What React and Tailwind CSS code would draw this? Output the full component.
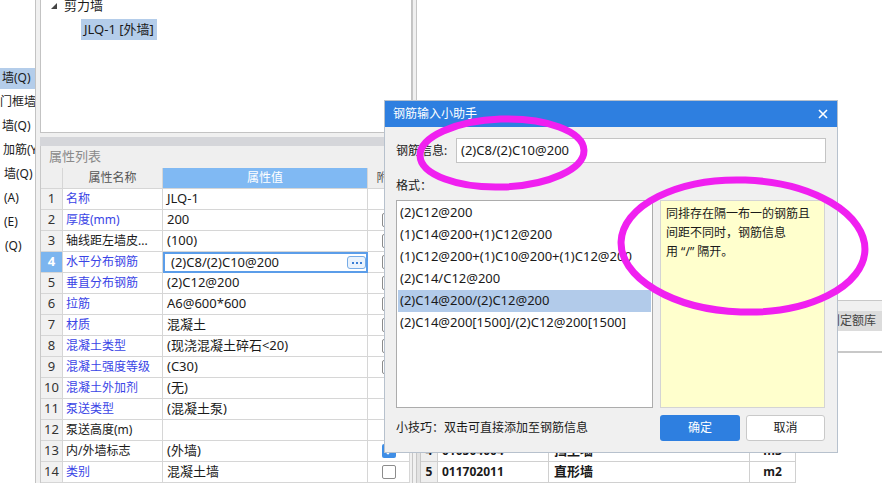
import React from "react";

// only the right-hand part of each label is visible in the narrow strip
const leftItems = [
  { text: "墙(Q)", pl: "pl-[2px]", sel: true },
  { text: "门框墙", pl: "pl-0" },
  { text: "墙(Q)", pl: "pl-[2px]" },
  { text: "加筋(Y)", pl: "pl-[3px]" },
  { text: "墙(Q)", pl: "pl-[4px]" },
  { text: "(A)", pl: "pl-[4px]" },
  { text: "(E)", pl: "pl-[4px]" },
  { text: "(Q)", pl: "pl-[5px]" },
];

const props = [
  { name: "名称", val: "JLQ-1", blue: true, cb: "" },
  { name: "厚度(mm)", val: "200", blue: true, cb: "off" },
  { name: "轴线距左墙皮...", val: "(100)", blue: false, cb: "off" },
  { name: "水平分布钢筋", val: "(2)C8/(2)C10@200", blue: true, cb: "off", sel: true },
  { name: "垂直分布钢筋", val: "(2)C12@200", blue: true, cb: "off" },
  { name: "拉筋", val: "A6@600*600", blue: true, cb: "off" },
  { name: "材质", val: "混凝土", blue: true, cb: "off" },
  { name: "混凝土类型", val: "(现浇混凝土碎石<20)", blue: true, cb: "off" },
  { name: "混凝土强度等级", val: "(C30)", blue: true, cb: "off" },
  { name: "混凝土外加剂", val: "(无)", blue: true, cb: "" },
  { name: "泵送类型", val: "(混凝土泵)", blue: true, cb: "" },
  { name: "泵送高度(m)", val: "", blue: false, cb: "" },
  { name: "内/外墙标志", val: "(外墙)", blue: false, cb: "on" },
  { name: "类别", val: "混凝土墙", blue: true, cb: "off" },
];

const formats = [
  "(2)C12@200",
  "(1)C14@200+(1)C12@200",
  "(1)C12@200+(1)C10@200+(1)C12@200",
  "(2)C14/C12@200",
  "(2)C14@200/(2)C12@200",
  "(2)C14@200[1500]/(2)C12@200[1500]",
];

// rows 1-3 sit under the dialog, so they are left empty
const quota = [
  { n: 1, code: "", name: "", unit: "" },
  { n: 2, code: "", name: "", unit: "" },
  { n: 3, code: "", name: "", unit: "" },
  { n: 4, code: "010504004", name: "挡土墙", unit: "m3" },
  { n: 5, code: "011702011", name: "直形墙", unit: "m2" },
];

function Checkbox({ state }) {
  if (!state) return null;
  if (state === "on") {
    return (
      <div className="w-[14px] h-[14px] rounded-[2px] bg-[#3f8ee6] flex items-center justify-center">
        <svg width="10" height="10" viewBox="0 0 10 10">
          <path d="M1.5 5.2 L4 7.6 L8.6 2.4" fill="none" stroke="white" strokeWidth="1.6" />
        </svg>
      </div>
    );
  }
  return <div className="w-[14px] h-[14px] rounded-[2px] border border-[#8c8c8c] bg-white" />;
}

function PropTable() {
  return (
    <div className="grid grid-cols-[22px_100px_205px_42px] border-l border-[#c8c8c8]">
      <div className="h-[21px] bg-[#efefef] border-r border-b border-[#d6d6d6]" />
      <div className="h-[21px] bg-[#efefef] border-r border-b border-[#d6d6d6] flex items-center justify-center text-[#555]">属性名称</div>
      <div className="h-[21px] bg-[#80b9f3] border-r border-b border-[#d6d6d6] flex items-center justify-center text-white">属性值</div>
      <div className="h-[21px] bg-[#efefef] border-r border-b border-[#d6d6d6] flex items-center justify-center text-[#555]">附加</div>
      {props.map((p, i) => (
        <React.Fragment key={i}>
          <div
            className={
              "h-[21px] border-r border-b border-[#d6d6d6] flex items-center justify-center text-[13px] " +
              (p.sel ? "bg-[#7cb5ef] text-white font-bold" : "bg-[#f1f1f1] text-[#333]")
            }
          >
            {i + 1}
          </div>
          <div
            className={
              "h-[21px] bg-white border-r border-b border-[#d6d6d6] flex items-center pl-[3px] whitespace-nowrap " +
              (p.blue ? "text-[#3a44e6]" : "text-[#1a1a1a]")
            }
          >
            {p.name}
          </div>
          {p.sel ? (
            <div className="h-[21px] bg-white border-2 border-[#5b9de9] flex items-center justify-between pl-[6px] text-[13px]">
              <span>{p.val}</span>
              <div className="w-[19px] h-[13px] rounded-[3px] border border-[#77ace7] bg-[#eaf3fd] flex items-center justify-center gap-[2px]">
                <span className="w-[2px] h-[2px] bg-[#3a7fd6]" />
                <span className="w-[2px] h-[2px] bg-[#3a7fd6]" />
                <span className="w-[2px] h-[2px] bg-[#3a7fd6]" />
              </div>
            </div>
          ) : (
            <div className="h-[21px] bg-white border-r border-b border-[#d6d6d6] flex items-center pl-[4px] text-[13px] whitespace-nowrap">
              {p.val}
            </div>
          )}
          <div className="h-[21px] bg-white border-r border-b border-[#d6d6d6] flex items-center pl-[14px]">
            <Checkbox state={p.cb} />
          </div>
        </React.Fragment>
      ))}
    </div>
  );
}

export default function App() {
  return (
    <div className="relative w-[882px] h-[483px] overflow-hidden bg-white flex text-[12px] text-[#1a1a1a] font-['Noto_Sans','Noto_Sans_CJK_SC',sans-serif]">
      {/* left component list */}
      <div className="w-[36px] shrink-0 bg-white border-r border-[#c3c3c3] overflow-hidden pt-[66px]">
        {leftItems.map((it, i) => (
          <div key={i} className="h-[24px] flex items-center">
            <div className={"h-[21px] w-full flex items-center overflow-hidden " + it.pl + (it.sel ? " bg-[#b4cdea]" : "")}>
              <span className="whitespace-nowrap text-[12px]">{it.text}</span>
            </div>
          </div>
        ))}
      </div>
      <div className="w-[4px] shrink-0 bg-[#f0f0f0]" />

      {/* main panel */}
      <div className="w-[372px] shrink-0 flex flex-col bg-[#f0f0f0]">
        <div className="h-[137px] bg-white border-x border-b border-[#c3c3c3] overflow-hidden">
          <div className="h-[20px] -mt-[4px] flex items-center pl-[10px] gap-[7px]">
            <svg width="6" height="6" viewBox="0 0 6 6">
              <polygon points="6,0 6,6 0,6" fill="#444" />
            </svg>
            <span className="text-[13px]">剪力墙</span>
          </div>
          <div className="mt-[3px] ml-[40px] inline-flex h-[21px] items-center px-[3px] bg-[#b4cdea] text-[13px]">
            JLQ-1 [外墙]
          </div>
        </div>
        <div className="h-[4px]" />
        <div className="h-[9px] bg-[#d5d6da]" />
        <div className="h-[23px] bg-[#efefef] border-l border-[#c8c8c8] flex items-center pl-[8px] text-[13px] text-[#8a8a8a]">
          属性列表
        </div>
        <PropTable />
      </div>

      {/* splitter */}
      <div className="w-[5px] shrink-0 bg-[#f0f0f0] border-x border-[#c6c6c6]" />

      {/* right panel */}
      <div className="flex-1 flex flex-col bg-white">
        <div className="h-[302px]" />
        <div className="h-[31px] border-t border-[#c8c8c8] bg-[#f0f0f0] flex items-end justify-end">
          <div className="h-[20px] bg-[#dcdcdc] flex items-center pl-[8px] pr-[6px] text-[12px] text-[#444]">规则定额库</div>
        </div>
        <div className="h-[20px]" />
        <div className="h-[2px] bg-[#c8c8c8]" />
        <div className="flex">
          <div className="w-[4px] bg-[#e2e2e2] border-r border-[#c8c8c8]" />
          <div className="grid grid-cols-[17px_111px_201px_46px] font-bold">
            <div className="h-[25px] bg-[#f0f0f0] border-r border-b border-[#d0d0d0]" />
            <div className="h-[25px] bg-[#f0f0f0] border-r border-b border-[#d0d0d0]" />
            <div className="h-[25px] bg-[#f0f0f0] border-r border-b border-[#d0d0d0]" />
            <div className="h-[25px] bg-[#f0f0f0] border-r border-b border-[#d0d0d0]" />
            {quota.map((q) => (
              <React.Fragment key={q.n}>
                <div className="h-[21px] bg-[#efefef] border-r border-b border-[#d0d0d0] flex items-center justify-center">{q.code ? q.n : ""}</div>
                <div className="h-[21px] border-r border-b border-[#d0d0d0] flex items-center pl-[4px]">{q.code}</div>
                <div className="h-[21px] border-r border-b border-[#d0d0d0] flex items-center pl-[5px] text-[13px]">{q.name}</div>
                <div className="h-[21px] border-r border-b border-[#d0d0d0] flex items-center justify-center">{q.unit}</div>
              </React.Fragment>
            ))}
          </div>
        </div>
      </div>

      {/* dialog */}
      <div className="absolute left-[384px] top-[100px] w-[454px] h-[353px] bg-[#f0f0f0] border border-[#b7c1cd] flex flex-col">
        <div className="h-[26px] bg-[#2e7fe0] flex items-center justify-between pl-[8px] pr-[9px] text-white">
          <span>钢筋输入小助手</span>
          <svg width="10" height="10" viewBox="0 0 10 10">
            <path d="M1 1 L9 9 M9 1 L1 9" stroke="white" strokeWidth="1.6" />
          </svg>
        </div>
        <div className="flex flex-col px-[11px]">
          <div className="mt-[11px] flex items-center">
            <span className="w-[60px]">钢筋信息:</span>
            <div className="w-[370px] h-[25px] bg-white border border-[#c4c4c4] flex items-center pl-[4px] text-[13px]">
              (2)C8/(2)C10@200
            </div>
          </div>
          <div className="mt-[15px] h-[16px] flex items-center">格式：</div>
          <div className="mt-[6px] flex gap-[7px] h-[208px]">
            <div className="w-[257px] bg-white border border-[#acacac] pt-[1px] px-[1px]">
              {formats.map((f, i) => (
                <div
                  key={i}
                  className={"h-[22px] flex items-center pl-[2px] text-[13px] whitespace-nowrap " + (i === 4 ? "bg-[#b2cbea]" : "")}
                >
                  {f}
                </div>
              ))}
            </div>
            <div className="w-[165px] bg-[#ffffcd] border border-[#d4d4d4] pl-[5px] pt-[3px] leading-[19px]">
              同排存在隔一布一的钢筋且
              <br />
              间距不同时，钢筋信息
              <br />
              用 “/” 隔开。
            </div>
          </div>
          <div className="mt-[7px] flex items-center">
            <span className="w-[264px]">小技巧：双击可直接添加至钢筋信息</span>
            <div className="w-[80px] h-[26px] rounded-[3px] bg-[#2e7fe0] text-white flex items-center justify-center">确定</div>
            <div className="ml-[6px] w-[79px] h-[26px] rounded-[3px] bg-white border border-[#c9c9c9] flex items-center justify-center">取消</div>
          </div>
        </div>
      </div>

      {/* hand-drawn annotation marks */}
      <svg className="absolute inset-0 pointer-events-none" width="882" height="483" viewBox="0 0 882 483">
        <ellipse cx="502" cy="153" rx="82" ry="34" transform="rotate(-2 502 153)" fill="none" stroke="#f020f0" strokeWidth="7" />
        <ellipse cx="743" cy="246" rx="122" ry="66" transform="rotate(2 743 246)" fill="none" stroke="#f020f0" strokeWidth="7" />
      </svg>
    </div>
  );
}
